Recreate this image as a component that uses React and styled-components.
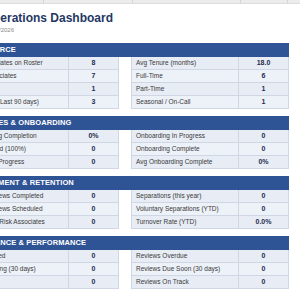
import React from 'react';
import styled, { createGlobalStyle } from 'styled-components';

const GlobalStyle = createGlobalStyle`
	html, body {
		margin: 0;
		padding: 0;
		background: #ffffff;
		overflow: hidden;
	}
	body {
		font-family: "Liberation Sans", Arial, sans-serif;
	}
`;

const Viewport = styled.div`
	width: 300px;
	height: 300px;
	overflow: hidden;
`;

const GridStrip = styled.div`
	display: flex;
	height: 3px;
	background: #ececec;
	border-bottom: 1px solid #dcdcdc;
`;

const GridCell = styled.div`
	width: ${p => p.w}px;
	flex: none;
	border-right: 1px solid #d6d6d6;
`;

const Sheet = styled.div`
	margin-left: -39px;
	width: 328px;
	padding-top: 7px;
`;

const Title = styled.h1`
	margin: 0;
	padding-left: 2px;
	font-size: 12px;
	line-height: 14px;
	font-weight: 700;
	color: #1f3864;
	white-space: nowrap;
`;

const Subtitle = styled.div`
	padding-left: 2px;
	margin-top: 1px;
	font-size: 6px;
	line-height: 8px;
	color: #8a8a8a;
	white-space: nowrap;
`;

const Section = styled.section`
	margin-top: ${p => (p.first ? 9 : 7)}px;
`;

const SectionHeader = styled.div`
	height: 14px;
	background: #2f5496;
	color: #ffffff;
	font-size: 7.5px;
	font-weight: 700;
	line-height: 14px;
	padding-left: 4px;
	letter-spacing: 0.1px;
	white-space: nowrap;
`;

const Columns = styled.div`
	display: grid;
	grid-template-columns: 158px 158px;
	column-gap: 12px;
`;

const Table = styled.div`
	display: flex;
	flex-direction: column;
`;

const Row = styled.div`
	display: grid;
	grid-template-columns: 108px 50px;
	height: 13px;
	background: ${p => (p.alt ? '#edf1f8' : '#e7ecf5')};
	border-bottom: 1px solid #cfd7e4;
	box-sizing: border-box;
`;

const Label = styled.div`
	padding-left: 4px;
	font-size: 6.5px;
	line-height: 12px;
	color: #3a3a3a;
	white-space: nowrap;
	overflow: hidden;
	border-right: 1px solid #cfd7e4;
	border-left: 1px solid #cfd7e4;
`;

const Value = styled.div`
	text-align: center;
	font-size: 7px;
	font-weight: 700;
	line-height: 12px;
	color: #1f2d4d;
	border-right: 1px solid #cfd7e4;
`;

const sections = [
	{
		title: 'WORKFORCE',
		left: [
			['Total Associates on Roster', '8'],
			['Active Associates', '7'],
			['On Leave', '1'],
			['New Hires (Last 90 days)', '3']
		],
		right: [
			['Avg Tenure (months)', '18.0'],
			['Full-Time', '6'],
			['Part-Time', '1'],
			['Seasonal / On-Call', '1']
		]
	},
	{
		title: 'NEW HIRES & ONBOARDING',
		left: [
			['Avg Training Completion', '0%'],
			['Fully Trained (100%)', '0'],
			['Training In Progress', '0']
		],
		right: [
			['Onboarding In Progress', '0'],
			['Onboarding Complete', '0'],
			['Avg Onboarding Complete', '0%']
		]
	},
	{
		title: 'ENGAGEMENT & RETENTION',
		left: [
			['Stay Interviews Completed', '0'],
			['Stay Interviews Scheduled', '0'],
			['Flagged At-Risk Associates', '0']
		],
		right: [
			['Separations (this year)', '0'],
			['Voluntary Separations (YTD)', '0'],
			['Turnover Rate (YTD)', '0.0%']
		]
	},
	{
		title: 'COMPLIANCE & PERFORMANCE',
		left: [
			['Certs Expired', '0'],
			['Certs Expiring (30 days)', '0'],
			['Certs Valid', '0']
		],
		right: [
			['Reviews Overdue', '0'],
			['Reviews Due Soon (30 days)', '0'],
			['Reviews On Track', '0']
		]
	}
];

const MetricTable = ({ rows }) => (
	<Table>
		{rows.map(([label, value], i) => (
			<Row key={label} alt={i % 2 === 1}>
				<Label>{label}</Label>
				<Value>{value}</Value>
			</Row>
		))}
	</Table>
);

const App = () => (
	<Viewport>
		<GlobalStyle />
		<GridStrip>
			<GridCell w={43} />
			<GridCell w={88} />
			<GridCell w={107} />
			<GridCell w={46} />
		</GridStrip>
		<Sheet>
			<Title>HR Operations Dashboard</Title>
			<Subtitle>Updated 1/15/2026</Subtitle>
			{sections.map((s, i) => (
				<Section key={s.title} first={i === 0}>
					<SectionHeader>{s.title}</SectionHeader>
					<Columns>
						<MetricTable rows={s.left} />
						<MetricTable rows={s.right} />
					</Columns>
				</Section>
			))}
		</Sheet>
	</Viewport>
);

export default App;
